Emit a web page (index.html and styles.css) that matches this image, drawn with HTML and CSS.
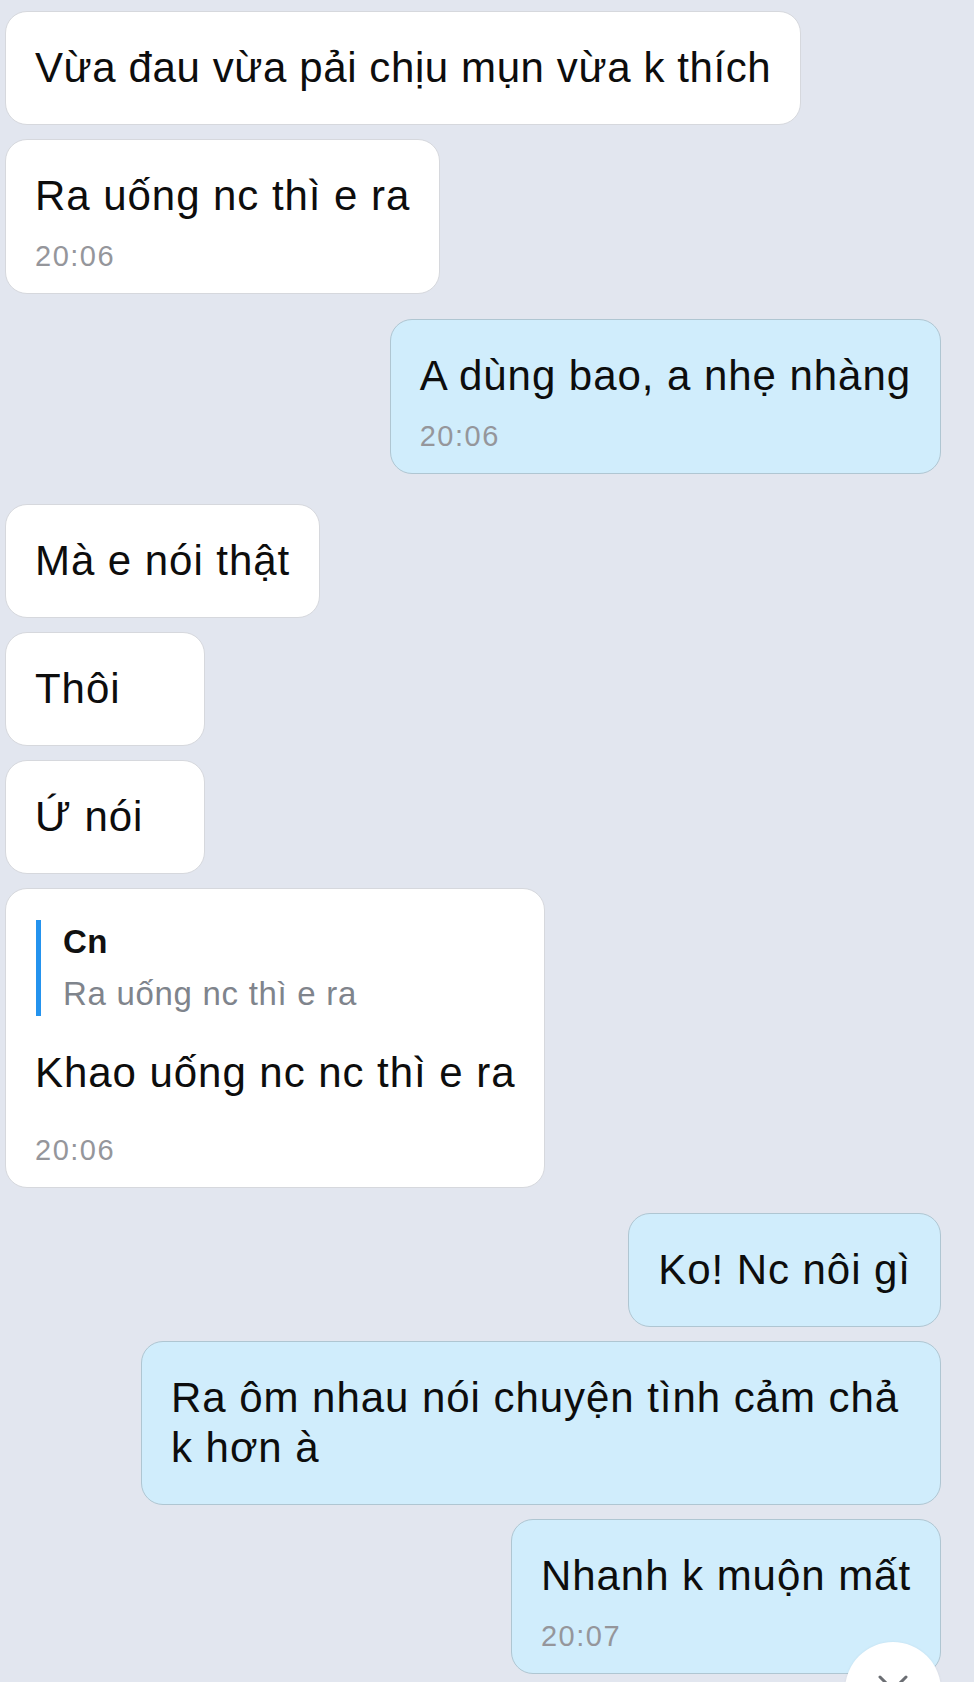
FILE: index.html
```html
<!DOCTYPE html>
<html lang="vi">
<head>
<meta charset="utf-8">
<title>Chat</title>
<link rel="stylesheet" href="styles.css">
</head>
<body>
<div class="screen">
  <div class="chat">
    <div class="msg in"><div class="bubble"><div class="text nowrap">Vừa đau vừa pải chịu mụn vừa k thích</div></div></div>
    <div class="msg in"><div class="bubble timed"><div class="text">Ra uống nc thì e ra</div><div class="time">20:06</div></div></div>
    <div class="msg out switch"><div class="bubble timed"><div class="text">A dùng bao, a nhẹ nhàng</div><div class="time">20:06</div></div></div>
    <div class="msg in switch-lg"><div class="bubble"><div class="text">Mà e nói thật</div></div></div>
    <div class="msg in"><div class="bubble short"><div class="text">Thôi</div></div></div>
    <div class="msg in"><div class="bubble short"><div class="text">Ứ nói</div></div></div>
    <div class="msg in">
      <div class="bubble timed reply-bubble">
        <div class="reply">
          <div class="reply-name">Cn</div>
          <div class="reply-text">Ra uống nc thì e ra</div>
        </div>
        <div class="text">Khao uống nc nc thì e ra</div>
        <div class="time">20:06</div>
      </div>
    </div>
    <div class="msg out switch"><div class="bubble"><div class="text">Ko! Nc nôi gì</div></div></div>
    <div class="msg out"><div class="bubble"><div class="text">Ra ôm nhau nói chuyện tình cảm chả k hơn à</div></div></div>
    <div class="msg out"><div class="bubble timed"><div class="text">Nhanh k muộn mất</div><div class="time">20:07</div></div></div>
  </div>
  <div class="scroll-down">
    <svg width="96" height="96" viewBox="0 0 96 96"><path d="M35 35 L48 48 L61 35" fill="none" stroke="#6b6e73" stroke-width="3" stroke-linecap="round" stroke-linejoin="round"/></svg>
  </div>
</div>
</body>
</html>
```
FILE: styles.css
```css
html, body {
  margin: 0;
  padding: 0;
}
body {
  background: #e2e6ef;
  font-family: "Liberation Sans", Arial, sans-serif;
  color: #0d0d0d;
}
.screen {
  position: relative;
  height: 1682px;
  overflow: hidden;
}
.chat {
  display: flex;
  flex-direction: column;
  padding: 11px 33px 0 5px;
}
.msg {
  display: flex;
  margin-top: 14px;
}
.msg:first-child {
  margin-top: 0;
}
.msg.in {
  justify-content: flex-start;
}
.msg.out {
  justify-content: flex-end;
}
.msg.switch {
  margin-top: 25px;
}
.msg.switch-lg {
  margin-top: 30px;
}
.bubble {
  box-sizing: border-box;
  max-width: 800px;
  padding: 31px 29px;
  border-radius: 22px;
  background: #ffffff;
  border: 1px solid #d6d8dd;
}
.msg.out .bubble {
  background: #d0edfc;
  border-color: #afc6d2;
}
.bubble.short {
  min-width: 200px;
}
.bubble.timed {
  padding-bottom: 20px;
}
.text {
  font-size: 42px;
  line-height: 50px;
  letter-spacing: 0.95px;
}
.text.nowrap {
  white-space: nowrap;
  letter-spacing: 0.6px;
}
.time {
  font-size: 29px;
  line-height: 34px;
  letter-spacing: 1.5px;
  color: #95969b;
  margin-top: 18px;
}
.reply-bubble {
  padding-bottom: 20px;
}
.reply {
  border-left: 5px solid #2493ee;
  padding-left: 22px;
  margin-left: 1px;
  margin-bottom: 32px;
}
.reply-name {
  font-size: 33px;
  line-height: 44px;
  font-weight: bold;
  color: #111;
  letter-spacing: 0.3px;
}
.reply-text {
  font-size: 33px;
  line-height: 44px;
  margin-top: 8px;
  color: #7f848c;
  letter-spacing: 0.7px;
}
.reply-bubble .time {
  margin-top: 35px;
}
.scroll-down {
  position: absolute;
  left: 845px;
  top: 1642px;
  width: 96px;
  height: 96px;
  border-radius: 50%;
  background: #ffffff;
  box-shadow: 0 0 3px rgba(0, 0, 0, 0.06);
}
.scroll-down svg {
  display: block;
}
```
